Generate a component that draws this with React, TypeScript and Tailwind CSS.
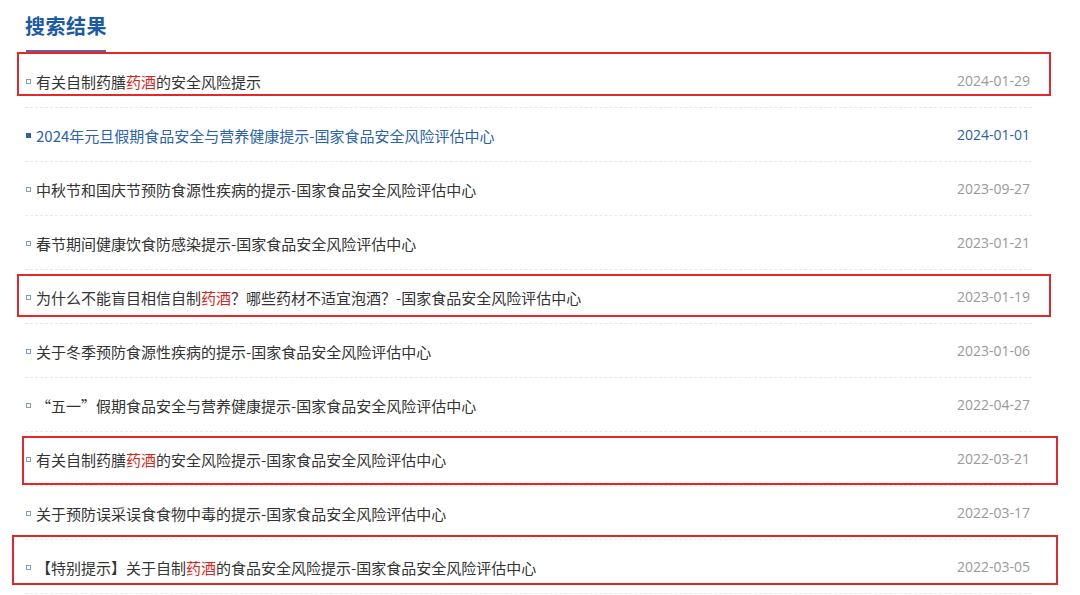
import React from "react";

type Row = { parts: { t: string; red?: boolean }[]; date: string; active?: boolean };

const rows: Row[] = [
  { parts: [{ t: "有关自制药膳" }, { t: "药酒", red: true }, { t: "的安全风险提示" }], date: "2024-01-29" },
  { parts: [{ t: "2024年元旦假期食品安全与营养健康提示-国家食品安全风险评估中心" }], date: "2024-01-01", active: true },
  { parts: [{ t: "中秋节和国庆节预防食源性疾病的提示-国家食品安全风险评估中心" }], date: "2023-09-27" },
  { parts: [{ t: "春节期间健康饮食防感染提示-国家食品安全风险评估中心" }], date: "2023-01-21" },
  { parts: [{ t: "为什么不能盲目相信自制" }, { t: "药酒", red: true }, { t: "？哪些药材不适宜泡酒？-国家食品安全风险评估中心" }], date: "2023-01-19" },
  { parts: [{ t: "关于冬季预防食源性疾病的提示-国家食品安全风险评估中心" }], date: "2023-01-06" },
  { parts: [{ t: "“五一”假期食品安全与营养健康提示-国家食品安全风险评估中心" }], date: "2022-04-27" },
  { parts: [{ t: "有关自制药膳" }, { t: "药酒", red: true }, { t: "的安全风险提示-国家食品安全风险评估中心" }], date: "2022-03-21" },
  { parts: [{ t: "关于预防误采误食食物中毒的提示-国家食品安全风险评估中心" }], date: "2022-03-17" },
  { parts: [{ t: "【特别提示】关于自制" }, { t: "药酒", red: true }, { t: "的食品安全风险提示-国家食品安全风险评估中心" }], date: "2022-03-05" },
];

export default function App() {
  return (
    <div
      className="relative w-[1080px] h-[595px] overflow-hidden bg-white"
      style={{ fontFamily: '"Noto Sans CJK SC", "Noto Sans", sans-serif' }}
    >
      <div className="h-[50px] pl-[25px] flex items-center">
        <h1 className="text-[20px] font-bold text-[#1c5aa8] leading-none tracking-[0.5px] mt-[1px]">
          搜索结果
        </h1>
      </div>
      <div className="ml-[26px] w-[80px] h-[2px] bg-[#6b5c9c]" />
      <div className="h-[2px]" />
      <ul className="ml-[25px] w-[1007px]">
        {rows.map((r, i) => (
          <li
            key={i}
            className="h-[54px] pt-[1px] flex items-center justify-between border-b border-dashed border-[#e8e8e8]"
          >
            <div className="flex items-center">
              <span
                className={
                  r.active
                    ? "ml-[1px] w-[5px] h-[5px] bg-[#2a62ad]"
                    : "ml-[1px] w-[5px] h-[5px] border border-[#7f9cc6]"
                }
              />
              <span
                className={
                  "ml-[5px] text-[15px] leading-none " +
                  (r.active ? "text-[#2a62ad]" : "text-[#333333]")
                }
              >
                {r.parts.map((p, j) =>
                  p.red ? (
                    <span key={j} className="text-[#d8261c]">
                      {p.t}
                    </span>
                  ) : (
                    <span key={j}>{p.t}</span>
                  )
                )}
              </span>
            </div>
            <span
              className={
                "mr-[2px] text-[14px] leading-none " +
                (r.active ? "text-[#2a5ea6]" : "text-[#999999]")
              }
              style={{ fontFamily: '"Open Sans", "Noto Sans", sans-serif' }}
            >
              {r.date}
            </span>
          </li>
        ))}
      </ul>

      {/* red annotation boxes */}
      <div className="absolute left-[17px] top-[52px] w-[1034px] h-[44px] border-2 border-[#e5262b]" />
      <div className="absolute left-[17px] top-[274px] w-[1034px] h-[43px] border-2 border-[#e5262b]" />
      <div className="absolute left-[22px] top-[436px] w-[1036px] h-[49px] border-2 border-[#e5262b]" />
      <div className="absolute left-[12px] top-[535px] w-[1046px] h-[50px] border-2 border-[#e5262b]" />
    </div>
  );
}
